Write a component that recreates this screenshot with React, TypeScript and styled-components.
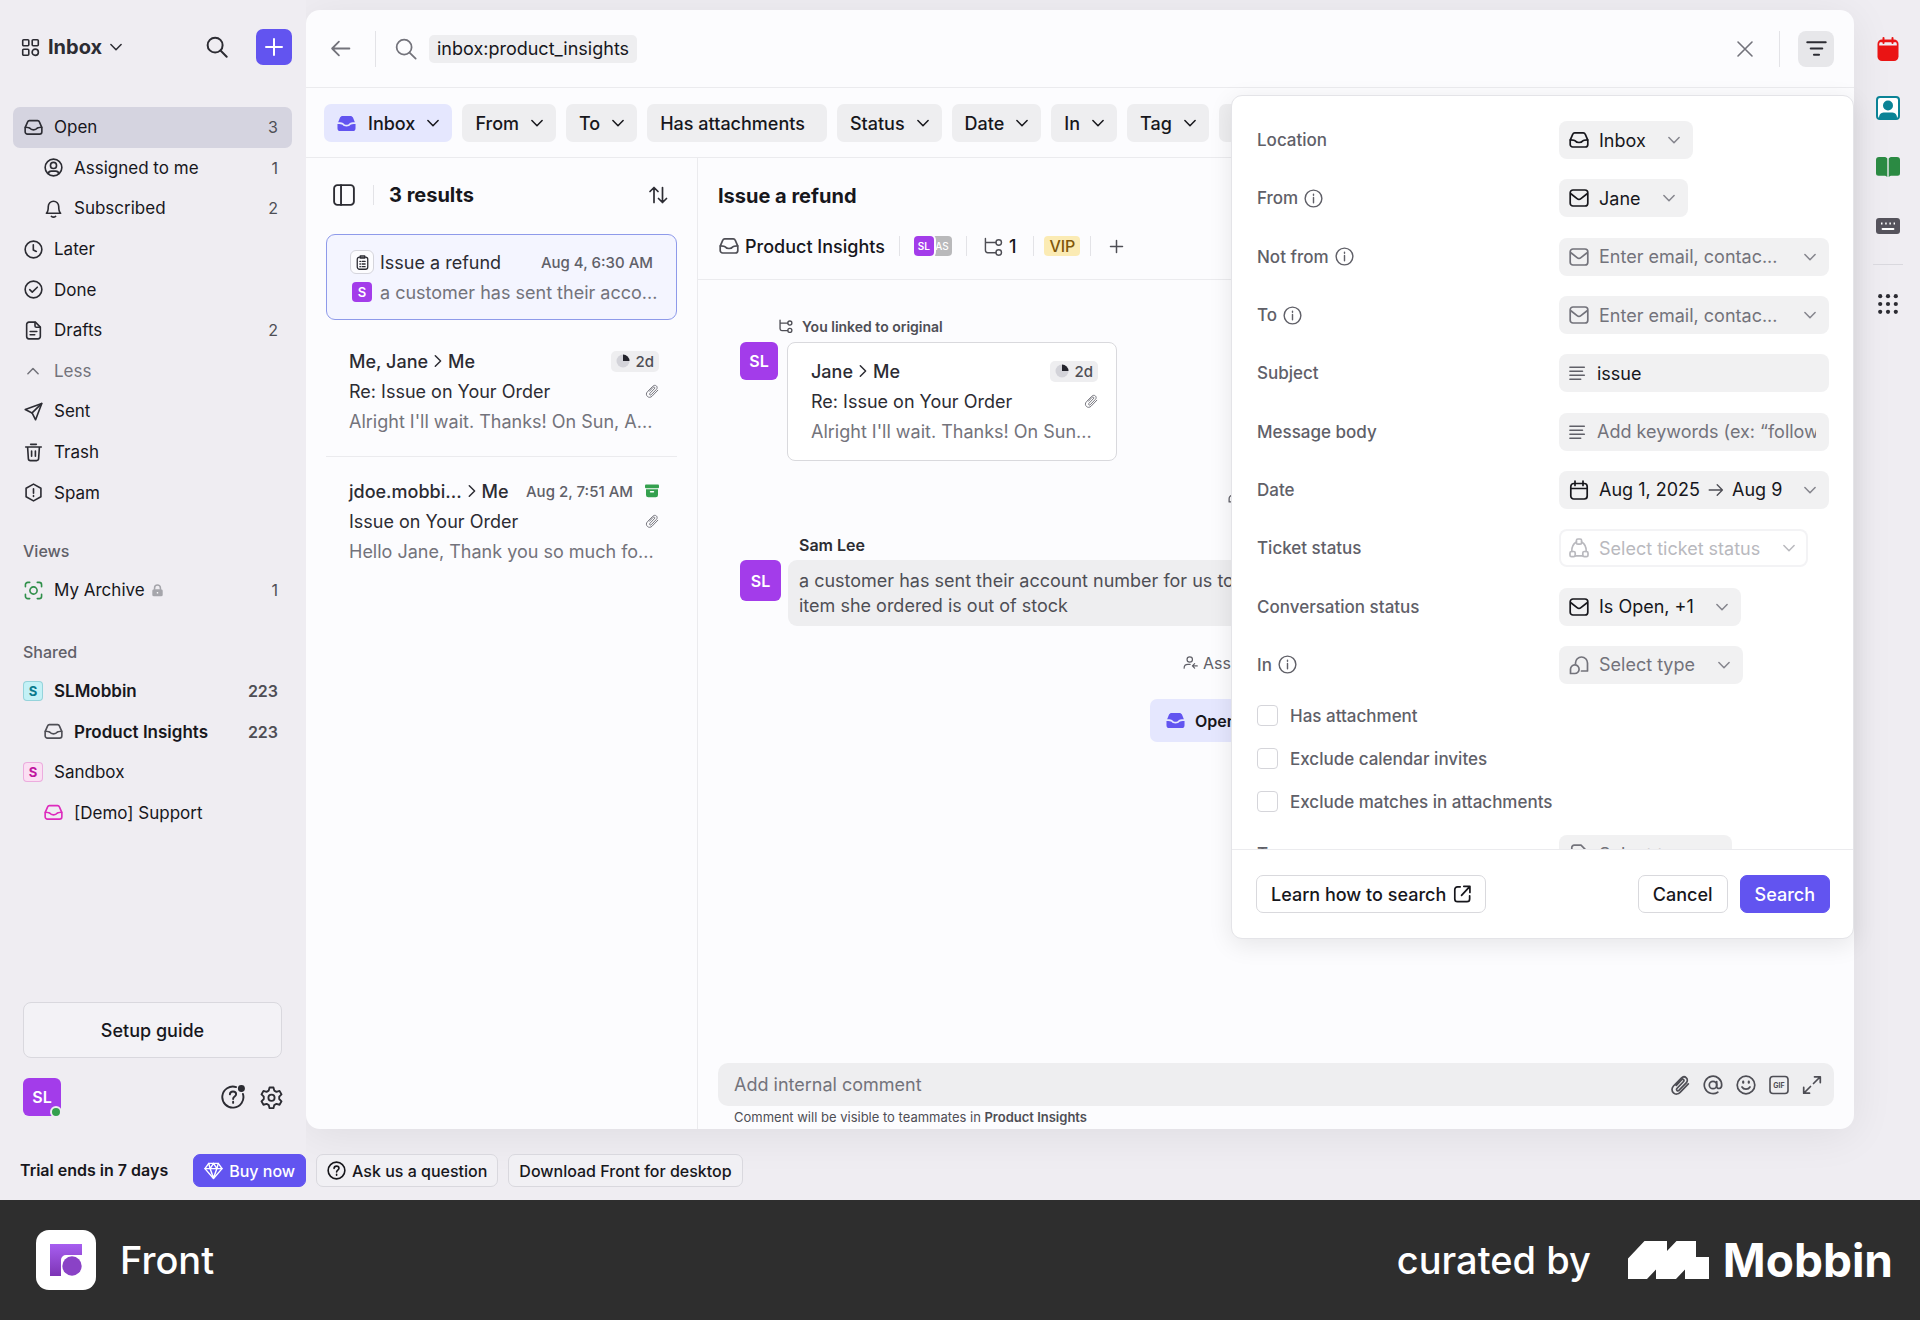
import React from "react";
import styled, { createGlobalStyle, css } from "styled-components";

const c = {
  page: "#efedf2",
  panel: "#fcfcfe",
  ink: "#17171c",
  text: "#2c2c33",
  soft: "#4e4e55",
  label: "#606068",
  muted: "#73737b",
  faint: "#b9b9be",
  line: "#ebebee",
  chip: "#eeeef0",
  field: "#f1f1f2",
  accent: "#6254f0",
  accentSoft: "#e5e7fe",
  violet: "#a33cea",
  green: "#34a04e",
};

const GlobalStyle = createGlobalStyle`
  *, *::before, *::after { box-sizing: border-box; }
  body {
    margin: 0;
    background: ${c.page};
    color: ${c.ink};
    font-family: Inter, "Liberation Sans", sans-serif;
    font-size: 18px;
  }
  button, input, select { font: inherit; color: inherit; margin: 0; }
  button { cursor: pointer; }
  a { color: inherit; text-decoration: none; }
  h1, h2, p { margin: 0; }
  svg { display: block; flex: none; }
`;

/* ---------- icons ---------- */

const paths: Record<string, React.ReactNode> = {
  apps: (
    <>
      <rect x="1.8" y="1.8" width="6.4" height="6.4" rx="1" />
      <rect x="11.8" y="1.8" width="6.4" height="6.4" rx="1" />
      <rect x="1.8" y="11.8" width="6.4" height="6.4" rx="1" />
      <circle cx="15" cy="15" r="3.3" />
    </>
  ),
  search: (
    <>
      <circle cx="8.3" cy="8.3" r="6.8" />
      <path d="m13.2 13.2 5.6 5.6" />
    </>
  ),
  plus: <path d="M10 2v16M2 10h16" />,
  close: <path d="m3 3 14 14M17 3 3 17" />,
  back: <path d="M18.5 10H2M8.5 3.5 2 10l6.5 6.5" />,
  forward: <path d="M1.5 10H18M11.5 3.5 18 10l-6.5 6.5" />,
  inbox: (
    <>
      <path d="M5.7 2.8h8.6c.9 0 1.6.5 1.9 1.3l2.6 6v4.4a2.5 2.5 0 0 1-2.5 2.500H3.7a2.5 2.5 0 0 1-2.500-2.500v-4.400l2.600-6c.3-.8 1-1.300 1.900-1.300Z" />
      <path d="M1.400 9.800c2.400 0 4.400.3 5 1.200.6 1 1.600 1.500 3.600 1.500s3-.5 3.600-1.500c.6-.9 2.600-1.200 5-1.200" />
    </>
  ),
  inboxSolid: (
    <g fill="currentColor" stroke="none">
      <path d="M6 2h8c1.300 0 2.300.6 2.800 1.700l2 5.100c-3 0-5.200.3-6 1.500-.5.800-1.400 1.100-2.800 1.100s-2.300-.3-2.800-1.100c-.8-1.200-3-1.500-6-1.500l2-5.100C3.700 2.600 4.700 2 6 2Z" />
      <path d="M.5 10.400c2.800 0 4.700.2 5.300 1 .8 1.100 2 1.700 4.200 1.700s3.400-.6 4.200-1.700c.6-.8 2.500-1 5.300-1v4.600a3 3 0 0 1-3 3h-13a3 3 0 0 1-3-3Z" />
    </g>
  ),
  person: (
    <>
      <circle cx="10" cy="10" r="8.800" />
      <circle cx="10" cy="7.800" r="3.200" />
      <path d="M4.600 16.400c.2-1.900 1.500-2.600 3-2.600h4.800c1.500 0 2.800.7 3 2.600" />
    </>
  ),
  bell: (
    <>
      <path d="M2.500 15c1.800-1.600 2-3.200 2-7.200a5.500 5.500 0 0 1 11 0c0 4 .2 5.600 2 7.200Z" />
      <path d="M7.800 18.300c1.200.9 3.200.9 4.400 0" />
    </>
  ),
  clock: (
    <>
      <circle cx="10" cy="10" r="8.800" />
      <path d="M9.800 5v5.500l3.200 1.600" />
    </>
  ),
  done: (
    <>
      <circle cx="10" cy="10" r="8.800" />
      <path d="m6 10.200 2.700 2.600 5.300-5.200" />
    </>
  ),
  draft: (
    <>
      <path d="M12 1.200H5.200a2.400 2.400 0 0 0-2.400 2.400v12.800a2.400 2.400 0 0 0 2.400 2.400h9.600a2.400 2.400 0 0 0 2.400-2.400V6.400Z" />
      <path d="M11.600 1.400v3.800c0 .9.5 1.400 1.400 1.400H17M6.500 11h7M6.500 14.500h4.800" />
    </>
  ),
  send: (
    <>
      <path d="M1.300 7.900 18.700 1.500l-6.500 17.200-3.700-7.200Z" />
      <path d="m8.500 11.500 10-9.800" />
    </>
  ),
  trash: (
    <>
      <path d="M1.800 4.200h16.400M7 1.400h6M3.800 4.500l.8 11.900a2.200 2.200 0 0 0 2.200 2.100h6.400a2.200 2.200 0 0 0 2.200-2.100l.8-11.900" />
      <path d="M8 8.500v5.500M12 8.500v5.500" />
    </>
  ),
  spam: (
    <>
      <path d="M10 1.200 17.800 5.600v8.800L10 18.800l-7.800-4.400V5.600Z" />
      <path d="M10 6v4.800M10 13.300v.9" />
    </>
  ),
  focus: (
    <>
      <path d="M1.500 6V4A2.500 2.500 0 0 1 4 1.500h2M14 1.500h2A2.500 2.500 0 0 1 18.500 4v2M18.500 14v2a2.500 2.500 0 0 1-2.500 2.500h-2M6 18.500H4A2.500 2.500 0 0 1 1.500 16v-2" />
      <circle cx="10" cy="10" r="3.800" />
    </>
  ),
  lock: (
    <g>
      <rect x="2" y="8" width="16" height="11" rx="2.500" fill="currentColor" stroke="none" />
      <path d="M5.500 8V6a4.500 4.500 0 0 1 9 0v2" />
      <circle cx="10" cy="13.500" r="1.300" fill="#fff" stroke="none" />
    </g>
  ),
  gear: (
    <>
      <path d="M8.300 1.300h3.400l.7 2.700 1.900 1.100 2.700-.8 1.700 3-2 2v2l2 2-1.700 3-2.700-.8-1.900 1.100-.7 2.700H8.300l-.7-2.700-1.900-1.100-2.700.8-1.700-3 2-2v-2l-2-2 1.700-3 2.700.8L7.600 4Z" />
      <circle cx="10" cy="10.200" r="2.700" />
    </>
  ),
  help: (
    <>
      <circle cx="10" cy="10" r="8.800" />
      <path d="M7.400 7.800c.1-1.500 1.200-2.400 2.600-2.400s2.600.9 2.600 2.300c0 1.900-2.500 2-2.500 3.900M10.100 14v.9" />
    </>
  ),
  helpDot: (
    <>
      <path d="M12.600 1.700A8.800 8.800 0 1 0 18.300 7.500" />
      <path d="M7.400 7.800c.1-1.500 1.200-2.400 2.600-2.400s2.600.9 2.600 2.300c0 1.900-2.500 2-2.500 3.900M10.100 14v.9" />
      <circle cx="17" cy="3" r="2.900" fill="currentColor" stroke="none" />
    </>
  ),
  gem: (
    <>
      <path d="M5 2.500h10l4 5.500-9 10.500L1 8Z" />
      <path d="M1 8h18M6.400 8 10 18M13.600 8 10 18M5 2.500 6.400 8 10 2.500 13.600 8 15 2.500" />
    </>
  ),
  sliders: <path d="M2 4.500h16M5 10h10M7.800 15.500h4.400" />,
  layout: (
    <>
      <rect x="1" y="1" width="18" height="18" rx="3" />
      <path d="M7.300 1v18" />
    </>
  ),
  sort: <path d="M6 17.500V2.500M2 6.500l4-4 4 4M14.500 2.500v15M10.500 13.500l4 4 4-4" />,
  clipboard: (
    <>
      <rect x="3" y="2.800" width="14" height="16.200" rx="3" />
      <path d="M7 1.200h6v3H7ZM6.500 8.500h.8M9.500 8.500h4M6.500 12h.8M9.500 12h4M6.500 15.500h.8M9.500 15.500h4" />
    </>
  ),
  clip: (
    <path d="m13.600 6.500-6.700 7c-.6.600-.5 1.500.1 2 .6.500 1.400.4 1.900-.1l7.300-7.600c1.500-1.500 1.500-3.700.1-5-1.400-1.300-3.500-1.200-5 .3L3.500 11c-2 2.100-2 5 0 6.800 1.900 1.800 4.700 1.600 6.600-.4l8.200-8.500M13.600 6.500c.6-.6.500-1.400 0-1.900-.6-.5-1.300-.4-1.900.1l-5.400 5.700" />
  ),
  tree: (
    <>
      <path d="M1.500 1.500V14a2.500 2.500 0 0 0 2.500 2.500h8.500M1.500 5.800h11" />
      <circle cx="15.500" cy="5.800" r="2.900" />
      <circle cx="15.500" cy="16.300" r="2.900" />
    </>
  ),
  info: (
    <>
      <circle cx="10" cy="10" r="8.800" />
      <path d="M10 9v5.500M10 5.500v1" />
    </>
  ),
  mail: (
    <>
      <rect x="1.200" y="2" width="17.600" height="16" rx="2.800" />
      <path d="m2.200 6 5.900 4.600c1.200.9 2.600.9 3.800 0L17.800 6" />
    </>
  ),
  lines: <path d="M1 3.500h16M1 8h14M1 12.500h16M1 17h12" />,
  calendar: (
    <>
      <rect x="1.800" y="3.500" width="16.400" height="15.500" rx="3" />
      <path d="M2 8.500h16M6 1v4.500M14 1v4.500" />
    </>
  ),
  status: (
    <>
      <rect x="7.400" y="1" width="5.200" height="5.200" rx="1.500" />
      <rect x="1" y="13.500" width="5.200" height="5.200" rx="1.500" />
      <rect x="13.800" y="13.500" width="5.200" height="5.200" rx="1.500" />
      <path d="M7.400 4C4 6 2.600 9 2.800 13.500M12.600 4c3.400 2 4.800 5 4.600 9.500M6.200 17.800h7.600" />
    </>
  ),
  chats: (
    <>
      <path d="M6.500 8.500V8a6 6 0 1 1 12 0v8h-6" />
      <path d="M1.500 18.500v-4.200a4.300 4.300 0 1 1 4.300 4.200Z" />
    </>
  ),
  doc: (
    <path d="M12 1.200H5.200a2.400 2.400 0 0 0-2.400 2.400v12.800a2.400 2.400 0 0 0 2.400 2.400h9.600a2.400 2.400 0 0 0 2.400-2.400V6.400Z" />
  ),
  external: (
    <path d="M8 2H5a3 3 0 0 0-3 3v10.500a3 3 0 0 0 3 3h10.500a3 3 0 0 0 3-3V12M12 1.500h6.800v6.800M18.500 1.800 9.500 11.500" />
  ),
  userIn: (
    <>
      <circle cx="9" cy="6" r="3.600" />
      <path d="M1.500 17.500c0-3.500 2.200-5 5-5h3M19 14.500h-6M15.500 11.500l-3 3 3 3" />
    </>
  ),
  at: (
    <>
      <circle cx="10" cy="10" r="3.700" />
      <path d="M13.700 6.500v4.700c0 3.300 5 3.200 5-1.200a8.700 8.700 0 1 0-3.900 7.200" />
    </>
  ),
  smile: (
    <>
      <circle cx="10" cy="10" r="8.800" />
      <path d="M6 12c1.600 2.800 6.400 2.800 8 0" />
      <path d="M7.200 6.700v1M12.800 6.700v1" strokeWidth="2.200" />
    </>
  ),
  expand: <path d="M12.500 1.800h5.800v5.800M18 2l-6.500 6.500M7.500 18.200H1.700v-5.800M2 18l6.500-6.500" />,
};

type IconProps = { name: string; size?: number; stroke?: number };

const Icon = ({ name, size = 20, stroke = 1.7 }: IconProps) => (
  <svg
    width={size}
    height={size}
    viewBox="0 0 20 20"
    fill="none"
    stroke="currentColor"
    strokeWidth={stroke}
    strokeLinecap="round"
    strokeLinejoin="round"
    aria-hidden="true"
  >
    {paths[name]}
  </svg>
);

const chevrons = {
  down: { w: 12, h: 12, d: "M.9 3.500 6 8.700l5.100-5.200" },
  up: { w: 12, h: 12, d: "M.9 8.700 6 3.500l5.100 5.200" },
  right: { w: 8, h: 14, d: "M1.300 1.800 6.600 7l-5.300 5.200" },
};

const Chevron = ({ to = "down" }: { to?: keyof typeof chevrons }) => {
  const { w, h, d } = chevrons[to];
  return (
    <svg width={w} height={h} viewBox={`0 0 ${w} ${h}`} fill="none" stroke="currentColor" strokeWidth="1.500" strokeLinecap="round" strokeLinejoin="round" aria-hidden="true">
      <path d={d} />
    </svg>
  );
};

const Gif = () => (
  <svg width="20" height="20" viewBox="0 0 20 20" aria-hidden="true">
    <rect x="1" y="1.500" width="18" height="17" rx="3" fill="none" stroke="currentColor" strokeWidth="1.600" />
    <text x="10" y="12.600" textAnchor="middle" fontSize="7" fontWeight="700" fontFamily="Inter, sans-serif" fill="currentColor">
      GIF
    </text>
  </svg>
);

const Pie = () => (
  <svg width="14" height="14" viewBox="0 0 14 14" aria-hidden="true">
    <circle cx="7" cy="7" r="6.500" fill="#d3d3d9" />
    <path d="M7 0.500A6.500 6.500 0 0 1 13.500 7H7Z" fill="#24242c" />
  </svg>
);

const ArchiveBox = () => (
  <svg width="14" height="14" viewBox="0 0 14 14" aria-hidden="true">
    <rect x="0" y="0.500" width="14" height="3.800" rx="1" fill={c.green} />
    <path d="M1 5.200h12v5.800a2.300 2.300 0 0 1-2.300 2.300H3.300A2.300 2.300 0 0 1 1 11Z" fill={c.green} />
    <rect x="4.800" y="7" width="4.400" height="1.500" rx="0.700" fill="#fff" />
  </svg>
);

/* ---------- frame ---------- */

const Shell = styled.div`
  display: flex;
  flex-direction: column;
  min-height: 100vh;
`;

const Workspace = styled.div`
  flex: 1;
  display: grid;
  grid-template-columns: 306px minmax(0, 1fr) 66px;
`;

const center = css`
  display: flex;
  align-items: center;
  justify-content: center;
`;

const IconButton = styled.button<{ $tone?: string }>`
  ${center}
  padding: 0;
  border: 0;
  background: none;
  color: ${(p) => p.$tone ?? c.text};
`;

const VRule = styled.span<{ $h: number; $before?: number }>`
  flex: none;
  width: 1px;
  height: ${(p) => p.$h}px;
  margin-left: ${(p) => p.$before ?? 0}px;
  background: #e3e3e7;
`;

const Avatar = styled.span<{ $size: number }>`
  ${center}
  flex: none;
  position: relative;
  width: ${(p) => p.$size}px;
  height: ${(p) => p.$size}px;
  border-radius: ${(p) => (p.$size > 30 ? 6 : 4)}px;
  background: ${c.violet};
  color: #fff;
  font-size: ${(p) => (p.$size > 30 ? 16 : 13)}px;
  font-weight: 600;
`;

const Slot = styled.span<{ $w: number }>`
  ${center}
  width: ${(p) => p.$w}px;
  flex: none;
`;

/* ---------- sidebar ---------- */

const Sidebar = styled.aside`
  display: flex;
  flex-direction: column;
  padding: 29px 14px 13px 13px;
`;

const SideHeader = styled.header`
  display: flex;
  align-items: center;
  height: 36px;
  margin-bottom: 42px;
  padding-left: 8px;
`;

const Switcher = styled.button`
  display: flex;
  align-items: center;
  gap: 8px;
  padding: 0;
  border: 0;
  background: none;
  color: ${c.text};
  font-size: 20px;
  font-weight: 700;
  margin-right: auto;
`;

const Compose = styled.button`
  ${center}
  width: 36px;
  height: 36px;
  margin-left: 28px;
  border: 0;
  border-radius: 7px;
  background: ${c.accent};
  color: #fff;
`;

const NavList = styled.nav<{ $height: number }>`
  display: grid;
  grid-auto-rows: 1fr;
  height: ${(p) => p.$height}px;
`;

const NavRow = styled.a<{ $active?: boolean; $sub?: boolean; $strong?: boolean; $muted?: boolean; $tone?: string }>`
  display: flex;
  align-items: center;
  gap: 11px;
  padding: 0 14px 0 ${(p) => (p.$sub ? 30 : 10)}px;
  border-radius: 7px;
  background: ${(p) => (p.$active ? "#d5d4e0" : "transparent")};
  color: ${(p) => (p.$muted ? c.muted : c.ink)};
  font-size: 17px;
  font-weight: ${(p) => (p.$strong ? 600 : 400)};

  svg {
    color: ${(p) => p.$tone ?? (p.$muted ? c.muted : p.$strong ? c.soft : c.text)};
  }
`;

const Count = styled.span`
  margin-left: auto;
  color: ${c.soft};
  font-size: 16px;
`;

const LabelWithLock = styled.span`
  display: flex;
  align-items: center;
  gap: 6px;

  svg {
    color: #a5a5ab;
  }
`;

const SideHeading = styled.h2<{ $gap: number }>`
  margin-top: ${(p) => p.$gap}px;
  padding-left: 10px;
  color: ${c.label};
  font-size: 16px;
  font-weight: 500;
  line-height: 37px;
`;

const TeamBadge = styled.span<{ $bg: string; $fg: string }>`
  ${center}
  width: 20px;
  height: 20px;
  border: 1px solid ${(p) => p.$fg}40;
  border-radius: 4px;
  background: ${(p) => p.$bg};
  color: ${(p) => p.$fg};
  font-size: 13px;
  font-weight: 700;
`;

const SetupGuide = styled.button`
  height: 56px;
  margin: auto 10px 20px;
  border: 1px solid #d9d8de;
  border-radius: 8px;
  background: #f3f2f6;
  font-size: 18px;
  font-weight: 500;
`;

const SideFooter = styled.div`
  display: flex;
  align-items: center;
  gap: 15px;
  padding: 0 9px 0 10px;

  ${Avatar} {
    margin-right: auto;
  }
`;

const Presence = styled.span`
  position: absolute;
  right: -1px;
  bottom: -2px;
  width: 12px;
  height: 12px;
  border: 2px solid ${c.page};
  border-radius: 50%;
  background: ${c.green};
`;

/* ---------- main panel ---------- */

const Panel = styled.main`
  position: relative;
  display: flex;
  flex-direction: column;
  margin-top: 10px;
  border-radius: 14px;
  background: ${c.panel};
  box-shadow: 0 6px 44px rgba(0, 0, 0, 0.07);
  clip-path: inset(-10px -66px -72px 0);
`;

const SearchHeader = styled.div`
  display: flex;
  align-items: center;
  height: 78px;
  padding: 0 20px 0 24px;
  border-bottom: 1px solid ${c.line};
`;

const SearchBox = styled.div`
  flex: 1;
  display: flex;
  align-items: center;
  gap: 12px;
  padding: 0 19px;
  color: ${c.muted};
`;

const Query = styled.span`
  padding: 0 8px;
  border-radius: 5px;
  background: ${c.chip};
  color: ${c.ink};
  line-height: 28px;
`;

const FilterToggle = styled(IconButton)`
  width: 36px;
  height: 36px;
  margin-left: 18px;
  border-radius: 8px;
  background: #e7e7ea;
`;

const FilterBar = styled.div`
  display: flex;
  gap: 10px;
  height: 70px;
  padding: 16px 18px 0;
  border-bottom: 1px solid ${c.line};
  overflow: hidden;
`;

const FilterChip = styled.button<{ $on?: boolean; $plain?: boolean }>`
  display: flex;
  align-items: center;
  flex: none;
  gap: 12px;
  height: 38px;
  padding: 0 ${(p) => (p.$plain ? 22 : 13)}px 0 13px;
  border: 0;
  border-radius: 7px;
  background: ${(p) => (p.$on ? c.accentSoft : c.chip)};
  color: ${c.ink};
  font-weight: 500;
`;

const ChipIcon = styled.span`
  color: ${c.accent};
`;

const Columns = styled.div`
  flex: 1;
  display: grid;
  grid-template-columns: 392px minmax(0, 1fr);
`;

/* ---------- results ---------- */

const Results = styled.section`
  padding: 18px 20px 0;
  border-right: 1px solid ${c.line};
`;

const ResultsHeader = styled.header`
  display: flex;
  align-items: center;
  gap: 15px;
  height: 38px;
  margin-bottom: 20px;
  padding: 0 5px 0 4px;

  ${IconButton} {
    width: 28px;
  }
`;

const Title = styled.h1`
  font-size: 20px;
  font-weight: 700;
  white-space: nowrap;
`;

const Selected = styled.article`
  display: flex;
  flex-direction: column;
  height: 86px;
  padding: 12px 23px;
  border: 1px solid #8e9aea;
  border-radius: 9px;
  background: #f4f5ff;
`;

const Line = styled.div<{ $tone?: string; $weight?: number }>`
  display: flex;
  align-items: center;
  gap: 6px;
  height: 30px;
  color: ${(p) => p.$tone ?? c.text};
  font-size: 18px;
  font-weight: ${(p) => p.$weight ?? 400};
  white-space: nowrap;
`;

const ClipboardBadge = styled.span`
  ${center}
  flex: none;
  width: 24px;
  height: 24px;
  border: 1px solid #d5d5dc;
  border-radius: 6px;
  background: ${c.panel};
`;

const When = styled.time<{ $after?: number }>`
  margin-left: auto;
  padding-right: ${(p) => p.$after ?? 0}px;
  color: ${c.label};
  font-size: 15px;
  font-weight: 500;
`;

const Result = styled.article<{ $first?: boolean }>`
  margin-top: ${(p) => (p.$first ? 7 : 0)}px;
  padding: 19px 18px 20px 23px;
  border-bottom: ${(p) => (p.$first ? `1px solid ${c.line}` : 0)};
`;

const Push = styled.span`
  display: flex;
  margin-left: auto;
  color: ${c.muted};
`;

const Age = styled(Push)`
  align-items: center;
  gap: 5px;
  padding: 0 5px;
  border-radius: 5px;
  background: ${c.chip};
  color: ${c.soft};
  font-size: 15px;
  line-height: 21px;
`;

/* ---------- conversation ---------- */

const Conversation = styled.section`
  display: flex;
  flex-direction: column;
`;

const ConvHeader = styled.header`
  padding: 18px 20px 0;
  border-bottom: 1px solid ${c.line};
  height: 122px;

  ${Title} {
    line-height: 40px;
  }
`;

const Meta = styled.div`
  display: flex;
  align-items: center;
  height: 60px;
  font-weight: 500;
`;

const MetaItem = styled.div<{ $pad: number }>`
  display: flex;
  align-items: center;
  gap: 6px;
  height: 20px;
  padding: 0 ${(p) => p.$pad}px;
  color: ${c.ink};

  & + & {
    border-left: 1px solid #e3e3e7;
  }
  &:first-child {
    padding-left: 1px;
  }
  svg {
    color: ${c.soft};
  }
`;

const MiniAvatars = styled.span`
  display: flex;
  flex-direction: row-reverse;
`;

const MiniAvatar = styled(Avatar)<{ $back?: boolean }>`
  font-size: 10px;
  ${(p) =>
    p.$back
      ? css`
          margin-left: -2px;
          background: #b9b9bb;
          font-weight: 500;
        `
      : css`
          box-shadow: 0 0 0 2px ${c.panel};
          z-index: 1;
        `}
`;

const Vip = styled.span`
  padding: 0 5px;
  border-radius: 4px;
  background: #fbebb4;
  color: #80560a;
  font-size: 16px;
  line-height: 20px;
`;

const Thread = styled.div`
  flex: 1;
  padding: 30px 42px 0;
`;

const LinkNote = styled.p`
  display: flex;
  align-items: center;
  gap: 9px;
  height: 32px;
  padding-left: 39px;
  color: ${c.soft};
  font-size: 14px;
  font-weight: 600;
`;

const Entry = styled.div<{ $gap: number }>`
  display: flex;
  align-items: flex-start;
  gap: ${(p) => p.$gap}px;
`;

const LinkedCard = styled.article`
  width: 330px;
  padding: 13px 18px 14px 23px;
  border: 1px solid #d9d9dd;
  border-radius: 8px;
  background: #fff;
`;

const EventRow = styled.p<{ $width: number; $height: number }>`
  display: flex;
  align-items: center;
  gap: 5px;
  width: ${(p) => p.$width}px;
  height: ${(p) => p.$height}px;
  margin: 0 auto;
  color: ${c.label};
  font-size: 16px;
  white-space: nowrap;
`;

const Author = styled.p`
  padding-left: 59px;
  font-size: 16px;
  font-weight: 600;
  line-height: 30px;
  color: ${c.text};
`;

const Bubble = styled.p`
  flex: 1;
  padding: 8px 11px;
  border-radius: 9px;
  background: ${c.chip};
  color: ${c.soft};
  font-size: 18px;
  line-height: 25px;
`;

const OpenOriginal = styled.button`
  display: flex;
  align-items: center;
  gap: 10px;
  width: 252px;
  height: 43px;
  margin: 0 auto;
  padding: 0 16px;
  border: 0;
  border-radius: 7px;
  background: ${c.accentSoft};
  font-size: 16px;
  font-weight: 600;
  color: ${c.ink};

  svg {
    color: ${c.accent};
  }
`;

const Composer = styled.div`
  display: flex;
  align-items: center;
  gap: 13px;
  height: 43px;
  margin: 0 20px;
  padding: 0 12px 0 16px;
  border-radius: 10px;
  background: ${c.chip};
`;

const Bare = styled.input`
  flex: 1;
  width: 100%;
  min-width: 0;
  padding: 0;
  border: 0;
  outline: 0;
  background: none;

  &::placeholder {
    color: ${c.muted};
    opacity: 1;
  }
`;

const ComposerNote = styled.p`
  padding: 0 36px;
  color: ${c.soft};
  font-size: 13px;
  line-height: 23px;

  strong {
    font-weight: 600;
  }
`;

/* ---------- search popover ---------- */

const Popover = styled.form`
  position: absolute;
  top: 85px;
  right: 0;
  z-index: 2;
  width: 623px;
  border: 1px solid #e4e4e8;
  border-radius: 11px;
  background: #fff;
  box-shadow: 0 6px 24px rgba(0, 0, 0, 0.09);
`;

const Fields = styled.div`
  height: 754px;
  padding: 15px 24px 0 25px;
  overflow: hidden;
  border-bottom: 1px solid ${c.line};
`;

const FieldGrid = styled.div<{ $height: number }>`
  display: grid;
  grid-auto-rows: 1fr;
  height: ${(p) => p.$height}px;
`;

const FieldRow = styled.div`
  display: grid;
  grid-template-columns: 302px minmax(0, 1fr);
  align-items: center;
`;

const FieldLabel = styled.label`
  display: flex;
  align-items: center;
  gap: 6px;
  color: ${c.label};
  font-size: 17px;
  font-weight: 500;
`;

const Control = styled.div<{ $fill?: boolean; $empty?: boolean; $disabled?: boolean; $softIcon?: boolean }>`
  display: flex;
  align-items: center;
  gap: 10px;
  justify-self: ${(p) => (p.$fill ? "stretch" : "start")};
  height: 38px;
  padding: 0 13px 0 10px;
  border-radius: 8px;
  background: ${(p) => (p.$disabled ? "#fff" : c.field)};
  box-shadow: ${(p) => (p.$disabled ? "inset 0 0 0 2px #f3f3f5" : "none")};
  color: ${(p) => (p.$disabled ? c.faint : p.$empty ? c.muted : c.ink)};

  > svg {
    color: ${(p) => (p.$softIcon ? c.label : "inherit")};
  }
`;

const Caret = styled.span<{ $gap: number; $disabled?: boolean }>`
  margin-left: ${(p) => p.$gap}px;
  color: ${(p) => (p.$disabled ? c.faint : "#85858d")};
`;

const Select = styled.select`
  appearance: none;
  padding: 0;
  border: 0;
  outline: 0;
  background: none;
  opacity: 1;
  color: inherit;
`;

const DateButton = styled.button`
  display: flex;
  align-items: center;
  gap: 8px;
  flex: 1;
  padding: 0;
  border: 0;
  background: none;
  white-space: nowrap;

  svg {
    color: ${c.soft};
  }
`;

const CheckRow = styled.label`
  display: flex;
  align-items: center;
  gap: 12px;
  color: ${c.label};
  font-size: 17px;
  font-weight: 500;
`;

const Check = styled.input`
  appearance: none;
  width: 21px;
  height: 21px;
  margin: 0;
  border: 1px solid #d5d5da;
  border-radius: 4px;
  background: #fff;
`;

const Actions = styled.div`
  display: flex;
  align-items: center;
  gap: 12px;
  height: 88px;
  padding: 0 23px 0 24px;
`;

const Action = styled.button<{ $primary?: boolean }>`
  display: flex;
  align-items: center;
  gap: 7px;
  height: 38px;
  padding: 0 14px;
  border: 1px solid ${(p) => (p.$primary ? c.accent : "#d9d9dd")};
  border-radius: 7px;
  background: ${(p) => (p.$primary ? c.accent : "#fff")};
  color: ${(p) => (p.$primary ? "#fff" : c.ink)};
  font-weight: 500;

  &:first-child {
    margin-right: auto;
  }
`;

/* ---------- right rail, trial bar, brand bar ---------- */

const Rail = styled.aside`
  display: flex;
  flex-direction: column;
  align-items: center;
  gap: 35px;
  padding: 37px 0 0 2px;
  z-index: 1;
`;

const RailRule = styled.span`
  width: 30px;
  height: 1px;
  margin: -9px 0 -6px;
  background: #d9d8de;
`;

const TrialBar = styled.div`
  display: flex;
  align-items: flex-start;
  gap: 10px;
  height: 71px;
  padding: 25px 20px 0;
  z-index: 1;
  font-size: 16px;
  font-weight: 500;
`;

const TrialText = styled.span`
  margin-right: 15px;
  font-weight: 600;
  line-height: 33px;
`;

const TrialButton = styled.button<{ $primary?: boolean }>`
  display: flex;
  align-items: center;
  gap: 6px;
  height: 33px;
  padding: 0 10px;
  border: 1px solid ${(p) => (p.$primary ? c.accent : "#d9d8de")};
  border-radius: 7px;
  background: ${(p) => (p.$primary ? c.accent : "#f1f0f4")};
  color: ${(p) => (p.$primary ? "#fff" : c.ink)};
`;

const BrandBar = styled.footer`
  display: flex;
  align-items: center;
  height: 120px;
  padding: 0 27px 0 36px;
  background: #2e2e2e;
  color: #fff;
`;

const BrandTile = styled.span`
  ${center}
  width: 60px;
  height: 60px;
  margin-right: 24px;
  border-radius: 13px;
  background: #fff;
`;

const BrandText = styled.span<{ $size: number; $weight: number }>`
  font-size: ${(p) => p.$size}px;
  font-weight: ${(p) => p.$weight};
`;

const Curated = styled.span`
  display: flex;
  align-items: center;
  margin-left: auto;
`;

const MobbinMark = styled.svg`
  margin: 0 14px 0 37px;
`;

/* ---------- data ---------- */

type NavItem = {
  icon: string;
  label: string;
  count?: string;
  active?: boolean;
  sub?: boolean;
  muted?: boolean;
};

const mainNav: NavItem[] = [
  { icon: "inbox", label: "Open", count: "3", active: true },
  { icon: "person", label: "Assigned to me", count: "1", sub: true },
  { icon: "bell", label: "Subscribed", count: "2", sub: true },
  { icon: "clock", label: "Later" },
  { icon: "done", label: "Done" },
  { icon: "draft", label: "Drafts", count: "2" },
  { icon: "up", label: "Less", muted: true },
  { icon: "send", label: "Sent" },
  { icon: "trash", label: "Trash" },
  { icon: "spam", label: "Spam" },
];

const filters = ["From", "To", "Has attachments", "Status", "Date", "In", "Tag"];

type Field = {
  id: string;
  label: string;
  kind: "select" | "combo" | "text" | "date";
  icon: string;
  value?: string;
  placeholder?: string;
  info?: boolean;
  disabled?: boolean;
};

const fields: Field[] = [
  { id: "location", label: "Location", kind: "select", icon: "inbox", value: "Inbox" },
  { id: "from", label: "From", kind: "select", icon: "mail", value: "Jane", info: true },
  { id: "not-from", label: "Not from", kind: "combo", icon: "mail", placeholder: "Enter email, contac...", info: true },
  { id: "to", label: "To", kind: "combo", icon: "mail", placeholder: "Enter email, contac...", info: true },
  { id: "subject", label: "Subject", kind: "text", icon: "lines", value: "issue" },
  { id: "body", label: "Message body", kind: "text", icon: "lines", placeholder: "Add keywords (ex: “follow" },
  { id: "date", label: "Date", kind: "date", icon: "calendar" },
  { id: "ticket", label: "Ticket status", kind: "select", icon: "status", placeholder: "Select ticket status", disabled: true },
  { id: "conversation", label: "Conversation status", kind: "select", icon: "mail", value: "Is Open, +1" },
  { id: "in", label: "In", kind: "select", icon: "chats", placeholder: "Select type", info: true },
];

const checks = ["Has attachment", "Exclude calendar invites", "Exclude matches in attachments"];

/* ---------- pieces ---------- */

const FieldControl = ({ field }: { field: Field }) => {
  const text = field.value ?? field.placeholder;
  if (field.kind === "select") {
    return (
      <Control $empty={!field.value} $disabled={field.disabled}>
        <Icon name={field.icon} />
        <Select id={field.id} disabled={field.disabled}>
          <option>{text}</option>
        </Select>
        <Caret $gap={12} $disabled={field.disabled}>
          <Chevron />
        </Caret>
      </Control>
    );
  }
  if (field.kind === "date") {
    return (
      <Control $fill>
        <Icon name="calendar" />
        <DateButton id={field.id} type="button">
          <span>Aug 1, 2025</span>
          <Icon name="forward" size={16} />
          <span>Aug 9</span>
        </DateButton>
        <Caret $gap={0}>
          <Chevron />
        </Caret>
      </Control>
    );
  }
  const isText = field.kind === "text";
  return (
    <Control $fill $empty={!field.value} $softIcon={isText}>
      <Icon name={field.icon} size={isText ? 18 : 20} />
      <Bare id={field.id} defaultValue={field.value} placeholder={field.placeholder} />
      {!isText && (
        <Caret $gap={0}>
          <Chevron />
        </Caret>
      )}
    </Control>
  );
};

const FieldLine = ({ field }: { field: Field }) => (
  <FieldRow>
    <FieldLabel htmlFor={field.id}>
      {field.label}
      {field.info && <Icon name="info" size={19} stroke={1.5} />}
    </FieldLabel>
    <FieldControl field={field} />
  </FieldRow>
);

type PreviewProps = { from: string; to: string; when?: string; subject: string; snippet: string };

const Preview = ({ from, to, when, subject, snippet }: PreviewProps) => (
  <>
    <Line $weight={500}>
      {from}
      <Chevron to="right" />
      {to}
      {when ? (
        <>
          <When $after={6}>{when}</When>
          <ArchiveBox />
        </>
      ) : (
        <Age>
          <Pie />
          2d
        </Age>
      )}
    </Line>
    <Line>
      {subject}
      <Push>
        <Icon name="clip" size={14} stroke={1.4} />
      </Push>
    </Line>
    <Line $tone={c.muted}>{snippet}</Line>
  </>
);

const SideNav = () => (
  <Sidebar>
    <SideHeader>
      <Switcher>
        <Icon name="apps" size={19} />
        Inbox
        <Chevron />
      </Switcher>
      <IconButton aria-label="Search">
        <Icon name="search" size={22} stroke={1.8} />
      </IconButton>
      <Compose aria-label="Compose">
        <Icon name="plus" size={20} stroke={2} />
      </Compose>
    </SideHeader>

    <NavList $height={406}>
      {mainNav.map((item) => (
        <NavRow key={item.label} href="#" $active={item.active} $sub={item.sub} $muted={item.muted}>
          <Slot $w={20}>{item.icon === "up" ? <Chevron to="up" /> : <Icon name={item.icon} size={19} />}</Slot>
          {item.label}
          {item.count && <Count>{item.count}</Count>}
        </NavRow>
      ))}
    </NavList>

    <SideHeading $gap={20}>Views</SideHeading>
    <NavList $height={40}>
      <NavRow href="#" $tone="#2f8f4a">
        <Slot $w={20}>
          <Icon name="focus" size={19} />
        </Slot>
        <LabelWithLock>
          My Archive
          <Icon name="lock" size={13} stroke={2.4} />
        </LabelWithLock>
        <Count>1</Count>
      </NavRow>
    </NavList>

    <SideHeading $gap={24}>Shared</SideHeading>
    <NavList $height={162}>
      <NavRow href="#" $strong>
        <TeamBadge $bg="#c3f1f6" $fg="#0b7a8c">S</TeamBadge>
        SLMobbin
        <Count>223</Count>
      </NavRow>
      <NavRow href="#" $sub $strong>
        <Slot $w={20}>
          <Icon name="inbox" size={19} />
        </Slot>
        Product Insights
        <Count>223</Count>
      </NavRow>
      <NavRow href="#">
        <TeamBadge $bg="#fbdff3" $fg="#c015a0">S</TeamBadge>
        Sandbox
      </NavRow>
      <NavRow href="#" $sub $tone="#dd2bbd">
        <Slot $w={20}>
          <Icon name="inbox" size={19} />
        </Slot>
        [Demo] Support
      </NavRow>
    </NavList>

    <SetupGuide>Setup guide</SetupGuide>
    <SideFooter>
      <Avatar $size={38}>
        SL
        <Presence />
      </Avatar>
      <IconButton aria-label="Help">
        <Icon name="helpDot" size={24} stroke={1.6} />
      </IconButton>
      <IconButton aria-label="Settings">
        <Icon name="gear" size={23} stroke={1.6} />
      </IconButton>
    </SideFooter>
  </Sidebar>
);

const SearchPopover = () => (
  <Popover onSubmit={(e) => e.preventDefault()}>
    <Fields>
      <FieldGrid $height={583}>
        {fields.map((field) => (
          <FieldLine key={field.id} field={field} />
        ))}
      </FieldGrid>
      <FieldGrid $height={129}>
        {checks.map((label) => (
          <CheckRow key={label}>
            <Check type="checkbox" />
            {label}
          </CheckRow>
        ))}
      </FieldGrid>
      <FieldGrid $height={62}>
        <FieldLine field={{ id: "tag", label: "Tag", kind: "select", icon: "doc", placeholder: "Select tag" }} />
      </FieldGrid>
    </Fields>
    <Actions>
      <Action type="button">
        Learn how to search
        <Icon name="external" size={18} stroke={1.9} />
      </Action>
      <Action type="button">Cancel</Action>
      <Action type="submit" $primary>
        Search
      </Action>
    </Actions>
  </Popover>
);

const ConversationView = () => (
  <Conversation>
    <ConvHeader>
      <Title as="h2">Issue a refund</Title>
      <Meta>
        <MetaItem $pad={14}>
          <Icon name="inbox" size={20} />
          Product Insights
        </MetaItem>
        <MetaItem $pad={14}>
          <MiniAvatars>
            <MiniAvatar $size={20} $back>
              AS
            </MiniAvatar>
            <MiniAvatar $size={20}>SL</MiniAvatar>
          </MiniAvatars>
        </MetaItem>
        <MetaItem $pad={17}>
          <Icon name="tree" size={19} stroke={1.5} />
          1
        </MetaItem>
        <MetaItem $pad={10}>
          <Vip>VIP</Vip>
        </MetaItem>
        <MetaItem $pad={18}>
          <IconButton aria-label="Add tag">
            <Icon name="plus" size={15} stroke={2} />
          </IconButton>
        </MetaItem>
      </Meta>
    </ConvHeader>

    <Thread>
      <LinkNote>
        <Icon name="tree" size={14} stroke={1.9} />
        You linked to original
      </LinkNote>
      <Entry $gap={9}>
        <Avatar $size={38}>SL</Avatar>
        <LinkedCard>
          <Preview from="Jane" to="Me" subject="Re: Issue on Your Order" snippet="Alright I'll wait. Thanks! On Sun..." />
        </LinkedCard>
      </Entry>
      <EventRow $width={96} $height={69}>
        <Icon name="chats" size={15} />
      </EventRow>
      <Author>Sam Lee</Author>
      <Entry $gap={7}>
        <Avatar $size={41}>SL</Avatar>
        <Bubble>
          a customer has sent their account number for us to
          <br />
          item she ordered is out of stock
        </Bubble>
      </Entry>
      <EventRow $width={186} $height={73}>
        <Icon name="userIn" size={15} stroke={1.6} />
        Assigned
      </EventRow>
      <OpenOriginal>
        <Icon name="inboxSolid" size={19} />
        Open
      </OpenOriginal>
    </Thread>

    <Composer>
      <Bare aria-label="Add internal comment" placeholder="Add internal comment" />
      <IconButton $tone={c.soft} aria-label="Attach file"><Icon name="clip" /></IconButton>
      <IconButton $tone={c.soft} aria-label="Mention"><Icon name="at" /></IconButton>
      <IconButton $tone={c.soft} aria-label="Emoji"><Icon name="smile" /></IconButton>
      <IconButton $tone={c.soft} aria-label="Insert GIF"><Gif /></IconButton>
      <IconButton $tone={c.soft} aria-label="Expand"><Icon name="expand" /></IconButton>
    </Composer>
    <ComposerNote>
      Comment will be visible to teammates in <strong>Product Insights</strong>
    </ComposerNote>
  </Conversation>
);

const RightRail = () => (
  <Rail>
    <IconButton aria-label="Calendar">
      <svg width="22" height="24" viewBox="0 0 22 24">
        <rect x="0.500" y="2.500" width="21" height="21.500" rx="4.500" fill="#ea1414" />
        <path d="M2.200 8.600V7a2 2 0 0 1 2-2h13.600a2 2 0 0 1 2 2v1.600Z" fill={c.page} />
        <path d="M6.500 1v5M15.500 1v5" stroke="#ea1414" strokeWidth="2" strokeLinecap="round" />
        <path d="M4 4.500h14" stroke="#ea1414" strokeWidth="1.500" />
      </svg>
    </IconButton>
    <IconButton aria-label="Contacts">
      <svg width="24" height="24" viewBox="0 0 24 24">
        <rect x="1" y="1" width="22" height="22" rx="3" fill="#fff" stroke="#0b8396" strokeWidth="2" />
        <circle cx="12" cy="9.500" r="5" fill="#0b8396" />
        <path d="M3 22c0-4.500 3-5.500 5.500-5.500h7c2.500 0 5.500 1 5.500 5.500Z" fill="#0b8396" />
      </svg>
    </IconButton>
    <IconButton aria-label="Knowledge base">
      <svg width="24" height="24" viewBox="0 0 24 24">
        <path d="M0 5a3 3 0 0 1 3-3h5c1.700 0 2.900.6 3.300 1.500V22c-1-.9-1.800-1.200-3.300-1.200H2.500A2.500 2.500 0 0 1 0 18.300ZM24 5a3 3 0 0 0-3-3h-5c-1.700 0-2.900.6-3.300 1.500V22c1-.9 1.800-1.200 3.300-1.200h5.500a2.500 2.500 0 0 0 2.500-2.500Z" fill="#2b8a43" />
      </svg>
    </IconButton>
    <IconButton aria-label="Shortcuts">
      <svg width="24" height="24" viewBox="0 0 24 24">
        <rect x="0" y="4" width="24" height="16" rx="3" fill="#55535c" />
        <path d="M5 9.500h1.500M9.200 9.500h1.500M13.400 9.500h1.500M17.600 9.500H19" stroke="#fff" strokeWidth="1.800" />
        <path d="M6.500 15h11" stroke="#fff" strokeWidth="1.800" strokeLinecap="round" />
      </svg>
    </IconButton>
    <RailRule />
    <IconButton aria-label="All apps">
      <svg width="20" height="20" viewBox="0 0 20 20" fill="#2c2c33">
        {[2.2, 10, 17.8].map((y) => [2.2, 10, 17.8].map((x) => <circle key={`${x}-${y}`} cx={x} cy={y} r="2.100" />))}
      </svg>
    </IconButton>
  </Rail>
);

export default function App() {
  return (
    <Shell>
      <GlobalStyle />
      <Workspace>
        <SideNav />
        <Panel>
          <SearchHeader>
            <IconButton $tone={c.muted} aria-label="Back">
              <Icon name="back" size={21} />
            </IconButton>
            <VRule $h={36} $before={24} />
            <SearchBox>
              <Icon name="search" size={22} stroke={1.6} />
              <Query>inbox:product_insights</Query>
            </SearchBox>
            <IconButton $tone={c.muted} aria-label="Clear search">
              <Icon name="close" size={20} stroke={1.6} />
            </IconButton>
            <VRule $h={36} $before={24} />
            <FilterToggle aria-label="Search filters">
              <Icon name="sliders" size={23} stroke={1.8} />
            </FilterToggle>
          </SearchHeader>

          <FilterBar>
            <FilterChip $on>
              <ChipIcon>
                <Icon name="inboxSolid" size={19} />
              </ChipIcon>
              Inbox
              <Chevron />
            </FilterChip>
            {filters.map((label) => {
              const plain = label === "Has attachments";
              return (
                <FilterChip key={label} $plain={plain}>
                  {label}
                  {!plain && <Chevron />}
                </FilterChip>
              );
            })}
            <FilterChip aria-label="More filters">
              <Chevron />
            </FilterChip>
          </FilterBar>

          <Columns>
            <Results>
              <ResultsHeader>
                <IconButton aria-label="Toggle list">
                  <Icon name="layout" size={22} />
                </IconButton>
                <VRule $h={20} />
                <Title>3 results</Title>
                <Push>
                  <IconButton aria-label="Sort">
                    <Icon name="sort" size={20} />
                  </IconButton>
                </Push>
              </ResultsHeader>

              <Selected>
                <Line>
                  <ClipboardBadge>
                    <Icon name="clipboard" size={15} />
                  </ClipboardBadge>
                  Issue a refund
                  <When>Aug 4, 6:30 AM</When>
                </Line>
                <Line $tone={c.muted}>
                  <Slot $w={24}>
                    <Avatar $size={20}>S</Avatar>
                  </Slot>
                  a customer has sent their acco...
                </Line>
              </Selected>

              <Result $first>
                <Preview from="Me, Jane" to="Me" subject="Re: Issue on Your Order" snippet="Alright I'll wait. Thanks! On Sun, A..." />
              </Result>
              <Result>
                <Preview
                  from="jdoe.mobbi..."
                  to="Me"
                  when="Aug 2, 7:51 AM"
                  subject="Issue on Your Order"
                  snippet="Hello Jane, Thank you so much fo..."
                />
              </Result>
            </Results>
            <ConversationView />
          </Columns>
          <SearchPopover />
        </Panel>
        <RightRail />
      </Workspace>

      <TrialBar>
        <TrialText>Trial ends in 7 days</TrialText>
        <TrialButton $primary>
          <Icon name="gem" size={19} stroke={1.5} />
          Buy now
        </TrialButton>
        <TrialButton>
          <Icon name="help" size={19} />
          Ask us a question
        </TrialButton>
        <TrialButton>Download Front for desktop</TrialButton>
      </TrialBar>

      <BrandBar>
        <BrandTile>
          <svg width="32" height="32" viewBox="0 0 32 32" aria-hidden="true">
            <defs>
              <linearGradient id="front" x1="0" y1="0" x2="0" y2="1">
                <stop offset="0" stopColor="#a75ef0" />
                <stop offset="1" stopColor="#7d35b5" />
              </linearGradient>
            </defs>
            <path d="M0 0h32v11H16a5 5 0 0 0-5 5v16H0Z" fill="url(#front)" />
            <circle cx="22" cy="22" r="9.700" fill="#8a42c6" />
          </svg>
        </BrandTile>
        <BrandText $size={38} $weight={500}>Front</BrandText>
        <Curated>
          <BrandText $size={38} $weight={500}>curated by</BrandText>
          <MobbinMark width="81" height="38" viewBox="0 0 81 38" fill="#fff" aria-hidden="true">
            <path d="M0 17.500 16.500 0H39v10L48.500 0H68v16h13v22H57v-9.500L48 38H28v-9.500L19 38H0Z" />
          </MobbinMark>
          <BrandText $size={46} $weight={700}>Mobbin</BrandText>
        </Curated>
      </BrandBar>
    </Shell>
  );
}
